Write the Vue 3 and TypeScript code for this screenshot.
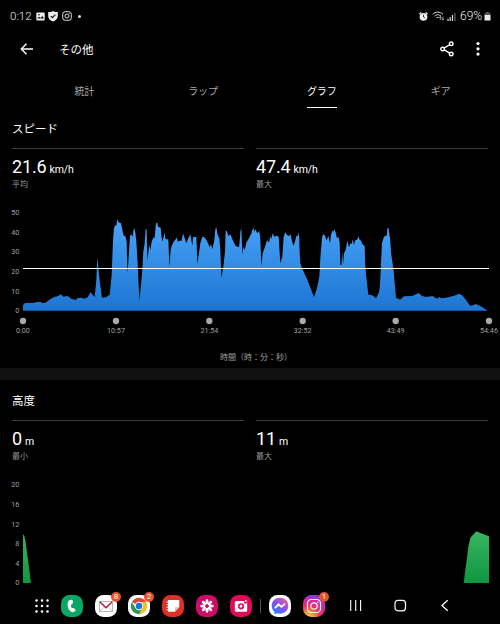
<script setup lang="ts">
  interface Stat {
    value: string;
    unit: string;
    label: string;
  }

  interface Tick {
    label: string;
    pos: number;
  }

  const tabs = ['統計', 'ラップ', 'グラフ', 'ギア'];
  const activeTab = 'グラフ';

  const speedStats: Stat[] = [
    { value: '21.6', unit: 'km/h', label: '平均' },
    { value: '47.4', unit: 'km/h', label: '最大' },
  ];

  const altitudeStats: Stat[] = [
    { value: '0', unit: 'm', label: '最小' },
    { value: '11', unit: 'm', label: '最大' },
  ];

  // Chart units are a third of a pixel
  const speedTicks: Tick[] = [
    { label: '50', pos: 38 },
    { label: '40', pos: 97 },
    { label: '30', pos: 155 },
    { label: '20', pos: 214 },
    { label: '10', pos: 273 },
    { label: '0', pos: 332 },
  ];

  const timeTicks: Tick[] = [
    { label: '0:00', pos: 69 },
    { label: '10:57', pos: 348 },
    { label: '21:54', pos: 628 },
    { label: '32:52', pos: 908 },
    { label: '43:49', pos: 1187 },
    { label: '54:46', pos: 1467 },
  ];

  const altitudeTicks: Tick[] = [
    { label: '20', pos: 38 },
    { label: '16', pos: 97 },
    { label: '12', pos: 156 },
    { label: '8', pos: 215 },
    { label: '4', pos: 274 },
    { label: '0', pos: 332 },
  ];

  const speedArea = `69,332 69,315 75,309 100,309 110,306 123,306 127,309 135,309 155,295 165,290
    173,289 182,283 190,290 203,288 215,297 227,300 233,294 245,293 252,296 263,292 272,276
    278,285 284,291 289,240 292,170 296,215 300,250 306,293 318,292 329,284 335,225 339,120
    342,85 346,75 349,77 352,58 356,67 363,70 369,100 372,108 376,108 380,125 382,218 384,200
    388,140 390,108 394,103 398,111 400,92 403,84 406,97 409,125 413,190 418,302 422,265
    427,210 430,155 434,130 437,87 440,88 442,182 448,135 451,150 455,125 458,118 461,112
    464,115 466,90 468,70 472,68 474,80 482,83 484,105 487,125 490,115 493,98 497,118 505,118
    508,200 512,150 515,138 521,125 527,118 531,112 533,125 539,122 545,122 549,100 553,112
    559,130 565,115 571,103 577,138 579,112 589,110 592,192 596,165 601,130 607,110 613,112
    619,120 625,132 629,142 633,132 637,148 643,120 646,88 649,82 653,105 658,115 661,150
    664,235 670,200 675,155 677,92 680,92 685,108 691,103 697,118 707,138 717,142 720,115
    721,95 724,84 727,162 731,140 734,150 739,128 747,115 755,98 760,82 763,95 766,88 772,100
    778,92 781,120 784,198 788,160 795,140 801,120 807,128 811,108 814,118 818,100 823,110
    831,107 836,110 839,160 841,190 847,170 851,110 856,97 861,105 867,108 872,103 875,120
    880,137 885,125 889,108 893,108 897,97 899,160 901,190 906,205 920,235 942,291 951,265
    958,230 961,175 966,115 969,102 975,107 980,122 985,107 990,130 993,105 997,92 1000,95
    1003,87 1007,98 1011,115 1015,110 1019,128 1021,195 1024,195 1027,155 1029,195 1032,160
    1037,150 1042,122 1047,142 1051,130 1055,132 1058,118 1062,135 1065,122 1072,118 1075,108
    1078,118 1083,122 1087,132 1094,138 1096,200 1100,240 1105,284 1117,286 1128,295 1137,277
    1140,255 1143,190 1146,128 1152,110 1161,105 1162,85 1166,85 1170,115 1174,165 1180,205
    1188,293 1200,299 1212,289 1237,288 1256,279 1265,287 1277,291 1298,288 1310,296 1317,292
    1327,295 1345,292 1362,287 1378,281 1388,287 1400,303 1411,318 1428,312 1445,320 1463,332`;

  const altitudeStart = '69,333 69,186 73,192 77,210 82,250 87,285 91,320 93,333';
  const altitudeEnd = '1391,333 1398,280 1405,225 1411,197 1429,178 1449,186 1467,193 1467,333';

  const petals = [0, 45, 90, 135];
  const gridDots = [5, 10.5, 16];
</script>

<template>
  <div class="screen">
    <header class="status-bar">
      <span class="clock">0:12</span>
      <svg class="status-image" width="9" height="9" viewBox="0 0 9 9">
        <rect x="0.3" y="0.5" width="8.4" height="8" rx="1" fill="#eee" />
        <path d="M1 6.5 3.2 4.8 4.5 6 6.3 4 8 6.5Z" fill="#111" />
        <circle cx="3" cy="2.8" r="0.8" fill="#111" />
      </svg>
      <svg width="10" height="11" viewBox="0 0 10 11">
        <path d="M5 0C6.5 1 8 1.2 9.8 1.1V5C9.8 7.8 7.5 9.8 5 10.6 2.5 9.8.2 7.8.2 5V1.1C2 1.2 3.5 1 5 0Z" fill="#eee" />
        <path d="M2.8 5.1 4.4 6.7 7.4 3.7" fill="none" stroke="#111" stroke-width="1.2" />
      </svg>
      <svg class="status-insta" width="10" height="10" viewBox="0 0 10 10" fill="none" stroke="#ddd">
        <rect x="0.7" y="0.7" width="8.6" height="8.6" rx="2.5" />
        <circle cx="5" cy="5" r="2" />
        <circle cx="7.4" cy="2.6" r="0.2" />
      </svg>
      <span class="status-dot"></span>
      <span class="spacer"></span>
      <svg width="9" height="9" viewBox="0 0 9 9">
        <path d="M.4 2 2.3.5M8.6 2 6.7.5" stroke="#eee" stroke-width="1.2" />
        <circle cx="4.5" cy="4.8" r="3.9" fill="#eee" />
        <path d="M4.5 2.7V5L6 5.8" fill="none" stroke="#111" stroke-width="0.8" />
      </svg>
      <svg class="status-wifi" width="12" height="10" viewBox="0 0 12 10" fill="none" stroke="#ddd">
        <path d="M.6 3.3C3.6.4 7.9.4 11 3.3M2.5 5.2C4.5 3.2 7 3.2 9 5.2M4.3 7C5.3 6.1 6.3 6.1 7.2 7" />
        <path d="M8.4 8.8V5.7M7.2 6.7 8.4 5.5 9.5 6.7M10.9 5.5V8.8M9.8 7.8 10.9 9 12 7.8" stroke-width="0.7" />
      </svg>
      <svg class="status-signal" width="9" height="9" viewBox="0 0 9 9">
        <path d="M1 9V6.7M3.2 9V5M5.5 9V3" stroke="#ddd" stroke-width="1.2" />
        <path d="M7.9 9V.8" stroke="#666" stroke-width="1.2" />
      </svg>
      <span class="battery">69%</span>
      <svg width="7" height="9" viewBox="0 0 7 9">
        <path d="M2 0H5V1H6.5V3.3H.5V1H2Z" fill="#555" />
        <path d="M.5 3H6.5V8.5H.5Z" fill="#eee" />
      </svg>
    </header>

    <div class="app-bar">
      <svg class="back" width="14" height="12" viewBox="0 0 14 12" fill="none" stroke="#fff" stroke-width="1.4">
        <path d="M13 6H1.5M6.5.8 1.3 6 6.5 11.2" />
      </svg>
      <h1>その他</h1>
      <svg class="share" width="14" height="16" viewBox="0 0 14 16" fill="none" stroke="#fff" stroke-width="1.4">
        <path d="M4 7.2 10 3.5M4 8.6 10 12.3" />
        <circle cx="2.6" cy="8" r="1.8" />
        <circle cx="11.2" cy="2.8" r="1.8" />
        <circle cx="11.2" cy="13" r="1.8" />
      </svg>
      <svg width="4" height="16" viewBox="0 0 4 16" fill="#fff">
        <circle cx="2" cy="2.5" r="1.6" />
        <circle cx="2" cy="7.8" r="1.6" />
        <circle cx="2" cy="13.1" r="1.6" />
      </svg>
    </div>

    <nav class="tabs">
      <button v-for="tab in tabs" :key="tab" class="tab" :class="{ active: tab === activeTab }">
        <span>{{ tab }}</span>
      </button>
    </nav>

    <section class="metric">
      <h2>スピード</h2>
      <div class="stats">
        <div v-for="stat in speedStats" :key="stat.label" class="stat">
          <div class="stat-value">{{ stat.value }}<small>{{ stat.unit }}</small></div>
          <div class="stat-label">{{ stat.label }}</div>
        </div>
      </div>
      <svg class="chart" width="500" height="168" viewBox="0 0 1500 504">
        <defs>
          <linearGradient id="speedFill" x1="0" y1="0" x2="0" y2="1">
            <stop offset="0" stop-color="#4ba3f8" />
            <stop offset="1" stop-color="#1b75d2" />
          </linearGradient>
        </defs>
        <polygon :points="speedArea" fill="url(#speedFill)" />
        <rect x="69" y="204" width="1398" height="3" fill="#fff" />
        <text v-for="tick in speedTicks" :key="tick.label" x="58" :y="tick.pos + 8" text-anchor="end">{{ tick.label }}</text>
        <g v-for="tick in timeTicks" :key="tick.label">
          <circle :cx="tick.pos" cy="363" r="9.5" fill="#aaa" />
          <text :x="tick.pos" y="400" text-anchor="middle">{{ tick.label }}</text>
        </g>
        <text class="axis-title" x="768" y="480" text-anchor="middle">時間（時：分：秒）</text>
      </svg>
    </section>

    <div class="divider"></div>

    <section class="metric">
      <h2>高度</h2>
      <div class="stats">
        <div v-for="stat in altitudeStats" :key="stat.label" class="stat">
          <div class="stat-value">{{ stat.value }}<small>{{ stat.unit }}</small></div>
          <div class="stat-label">{{ stat.label }}</div>
        </div>
      </div>
      <svg class="chart" width="500" height="115" viewBox="0 0 1500 345">
        <defs>
          <linearGradient id="altitudeFill" gradientUnits="userSpaceOnUse" x1="0" y1="178" x2="0" y2="333">
            <stop offset="0" stop-color="#3ab560" />
            <stop offset="1" stop-color="#0f9640" />
          </linearGradient>
        </defs>
        <polygon :points="altitudeStart" fill="url(#altitudeFill)" />
        <polygon :points="altitudeEnd" fill="url(#altitudeFill)" />
        <text v-for="tick in altitudeTicks" :key="tick.label" x="58" :y="tick.pos + 8" text-anchor="end">{{ tick.label }}</text>
      </svg>
    </section>

    <footer class="dock">
      <svg viewBox="0 0 22 22" fill="#fff">
        <template v-for="y in gridDots" :key="y">
          <circle v-for="x in gridDots" :key="x" :cx="x + 0.5" :cy="y + 0.5" r="1.25" />
        </template>
      </svg>
      <svg viewBox="0 0 22 22">
        <rect width="22" height="22" rx="8.5" fill="#0aa665" />
        <path d="M8.3 5.2 10.6 4.7C11.3 4.6 11.7 5 11.7 5.5L11.9 7.8C11.9 8.5 11.5 8.8 10.2 9.3 9.8 10.5 10 11.8 10.7 13 11.4 13.6 12 13.1 12.7 13.1L14.3 14.5C14.9 15.1 14.7 15.6 14.1 16.1 13 17.3 11.4 17.6 9.8 16.5 6.8 14.4 5.9 10 7.2 6.5 7.4 5.8 7.8 5.4 8.3 5.2Z" fill="#fff" />
      </svg>
      <div class="app">
        <svg viewBox="0 0 22 22">
          <rect width="22" height="22" rx="8.5" fill="#fff" />
          <rect x="4.5" y="6.5" width="13" height="10" fill="#fff" stroke="#b5b5b5" />
          <path d="M5 16 9.3 11.8M17 16 12.7 11.8" stroke="#c9c9c9" />
          <path d="M5 7 11 12.7 17 7" fill="none" stroke="#a7193f" stroke-width="1.4" />
        </svg>
        <span class="badge">8</span>
      </div>
      <div class="app">
        <svg viewBox="0 0 22 22">
          <rect width="22" height="22" rx="8.5" fill="#fff" />
          <path d="M11 11 3.9 6.9A8.2 8.2 0 0 1 18.1 6.9H11Z" fill="#dc4637" />
          <path d="M11 11V6.9H18.1A8.2 8.2 0 0 1 11 19.2L14.5 13Z" fill="#f5c01c" />
          <path d="M11 11 14.5 13 11 19.2A8.2 8.2 0 0 1 3.9 6.9L7.5 13Z" fill="#279952" />
          <circle cx="11" cy="11" r="4.2" fill="#fff" />
          <circle cx="11" cy="11" r="3.3" fill="#2870da" />
        </svg>
        <span class="badge">2</span>
      </div>
      <svg viewBox="0 0 22 22">
        <rect width="22" height="22" rx="8.5" fill="#df3027" />
        <path d="M6 5H17.3V12L12.8 16.8H6Z" fill="#fff" />
        <path d="M17.3 12.3H13V16.8Z" fill="#f0b9b5" />
        <path d="M4.6 7H6.6M4.6 9.6H6.6M4.6 12.2H6.6M4.6 14.8H6.6" stroke="#fff" />
      </svg>
      <svg viewBox="0 0 22 22">
        <rect width="22" height="22" rx="8.5" fill="#c90d68" />
        <g fill="#fff">
          <template v-for="angle in petals" :key="angle">
            <ellipse cx="11" cy="6.8" rx="1.5" ry="2.7" :transform="`rotate(${angle} 11 11)`" />
            <ellipse cx="11" cy="15.2" rx="1.5" ry="2.7" :transform="`rotate(${angle} 11 11)`" />
          </template>
        </g>
        <circle cx="11" cy="11" r="1.6" fill="#c90d68" />
      </svg>
      <svg viewBox="0 0 22 22">
        <rect width="22" height="22" rx="8.5" fill="#e00b59" />
        <rect x="4.8" y="6" width="12.4" height="10.8" rx="1.6" fill="#fff" />
        <circle cx="11" cy="11.3" r="2.3" fill="none" stroke="#e00b59" stroke-width="1.7" />
        <circle cx="15.5" cy="7.3" r="1.5" fill="#e00b59" />
        <circle cx="15.8" cy="6" r="0.9" fill="#fff" />
      </svg>
      <span class="separator"></span>
      <svg viewBox="0 0 22 22">
        <defs>
          <linearGradient id="messenger" x1="0.1" y1="1" x2="0.9" y2="0">
            <stop offset="0" stop-color="#1688ff" />
            <stop offset="0.5" stop-color="#8350f6" />
            <stop offset="1" stop-color="#ff5b83" />
          </linearGradient>
        </defs>
        <rect width="22" height="22" rx="8.5" fill="#fff" />
        <path d="M11 2.8C6.2 2.8 2.7 6.2 2.7 10.8 2.7 13.2 3.7 15.3 5.4 16.7V19.2L7.9 18.2C14 20 19.3 16.3 19.3 10.8 19.3 6.2 15.8 2.8 11 2.8Z" fill="url(#messenger)" />
        <path d="M6 13.2 9.5 9.3 12.5 11.9 16 8.7" fill="none" stroke="#fff" stroke-width="1.8" />
      </svg>
      <div class="app">
        <svg viewBox="0 0 22 22">
          <defs>
            <radialGradient id="insta" cx="0.25" cy="1.05" r="1.1">
              <stop offset="0" stop-color="#ffd44f" />
              <stop offset="0.25" stop-color="#ff9230" />
              <stop offset="0.5" stop-color="#f52d65" />
              <stop offset="0.78" stop-color="#c829b7" />
              <stop offset="1" stop-color="#7b3de0" />
            </radialGradient>
          </defs>
          <rect width="22" height="22" rx="8.5" fill="url(#insta)" />
          <rect x="4.5" y="4.5" width="13" height="13" rx="3.8" fill="none" stroke="#fff" stroke-width="1.2" />
          <circle cx="11" cy="11" r="3.2" fill="none" stroke="#fff" stroke-width="1.2" />
          <circle cx="14.8" cy="7.2" r="0.8" fill="#fff" />
        </svg>
        <span class="badge">1</span>
      </div>
      <svg viewBox="0 0 22 22" stroke="#fff" stroke-width="1.1">
        <path d="M5.7 5V16M10.7 5V16M15.6 5V16" />
      </svg>
      <svg viewBox="0 0 22 22" fill="none" stroke="#fff" stroke-width="1.2">
        <rect x="6" y="5.3" width="10.5" height="10.5" rx="3" />
      </svg>
      <svg viewBox="0 0 22 22" fill="none" stroke="#fff" stroke-width="1.3">
        <path d="M13.7 5.3 8 10.5 13.7 15.7" />
      </svg>
    </footer>
  </div>
</template>

<style>
  body {
    background: #000;
  }
</style>

<style scoped>
  .screen {
    width: 500px;
    height: 624px;
    overflow: hidden;
    background: #000;
    color: #fff;
    font-family: Roboto, 'Noto Sans CJK JP', sans-serif;
  }

  svg {
    display: block;
    flex-shrink: 0;
  }

  .status-bar {
    display: flex;
    align-items: center;
    height: 32px;
    padding: 0 9px 0 10px;
    box-sizing: border-box;
    font-size: 12px;
    font-weight: 300;
    color: #eee;
  }

  .clock {
    width: 26px;
    font-size: 11.5px;
  }

  .status-image {
    margin-right: 3px;
  }

  .status-insta {
    margin-left: 4px;
  }

  .status-dot {
    width: 3px;
    height: 3px;
    margin-left: 6px;
    border-radius: 50%;
    background: #ddd;
  }

  .spacer {
    flex: 1;
  }

  .status-wifi {
    margin-left: 4px;
  }

  .status-signal {
    margin: 1px 4px 0 3px;
  }

  .battery {
    width: 24px;
  }

  .app-bar {
    display: flex;
    align-items: center;
    height: 34px;
    padding: 0 20px;
  }

  .back {
    margin-right: 25px;
  }

  h1 {
    flex: 1;
    margin: 0;
    font-size: 11.5px;
    font-weight: 400;
  }

  .share {
    margin-right: 22px;
  }

  .tabs {
    display: grid;
    grid-template-columns: repeat(4, 1fr);
    height: 42px;
    padding-left: 25px;
  }

  .tab {
    display: flex;
    justify-content: center;
    padding: 0;
    border: none;
    background: none;
    color: #aaa;
    font-family: inherit;
    font-size: 10px;
    line-height: 51px;
  }

  .tab span {
    height: 41px;
  }

  .tab.active {
    color: #fff;
  }

  .tab.active span {
    border-bottom: 1px solid #fff;
  }

  .metric h2 {
    height: 40px;
    margin: 0;
    padding-left: 12px;
    font-size: 11.5px;
    font-weight: 400;
    line-height: 42px;
  }

  .stats {
    display: grid;
    grid-template-columns: 1fr 1fr;
    gap: 12px;
    height: 52px;
    padding: 0 12px;
  }

  .stat {
    border-top: 1px solid #3c3c3c;
  }

  .stat-value {
    height: 23px;
    margin-top: 7px;
    font-size: 18px;
    line-height: 22px;
    letter-spacing: -0.15px;
  }

  .stat-value small {
    margin-left: 3px;
    font-size: 10.5px;
  }

  .stat-label {
    color: #999;
    font-size: 8px;
    line-height: 12px;
  }

  .chart text {
    fill: #a0a0a0;
    font-size: 21.5px;
  }

  .chart .axis-title {
    font-size: 24px;
  }

  .divider {
    height: 12px;
    background: #111;
  }

  .dock {
    display: grid;
    grid-template-columns: 30px 34px 33px 34px 34px 34px 30px 9px 34px 42px 44px 45px 22px;
    align-items: center;
    height: 22px;
    padding: 7.5px 0 0 31px;
  }

  .dock svg {
    width: 22px;
    height: 22px;
  }

  .app {
    position: relative;
    width: 22px;
  }

  .badge {
    position: absolute;
    top: -3px;
    left: 16px;
    width: 10px;
    height: 10px;
    border-radius: 50%;
    background: #e65328;
    font-size: 8px;
    line-height: 10px;
    text-align: center;
  }

  .separator {
    width: 1px;
    height: 14px;
    background: #555;
  }
</style>
